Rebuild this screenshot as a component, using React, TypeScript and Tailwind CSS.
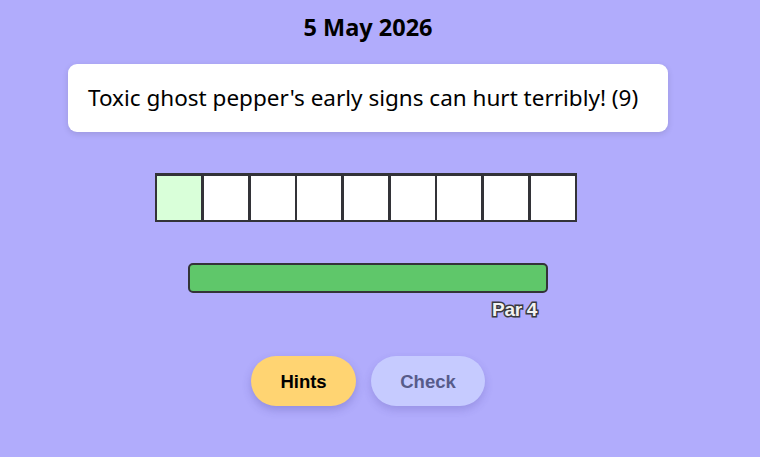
import React from 'react'

const LETTERS = 9

export default function App() {
  return (
    <div className="min-h-[457px] w-full bg-[#b1acfc] font-['Noto_Sans',sans-serif]">
      <div className="flex w-[736px] flex-col items-center pt-[11px]">
        <h1 className="text-[23.5px] font-bold leading-[32px] text-black">5 May 2026</h1>

        {/* Clue */}
        <div className="mt-[21px] flex h-[68px] w-[600px] items-center rounded-[9px] bg-white px-[20px] shadow-[0_2px_6px_rgba(0,0,0,0.12)]">
          <p className="text-[22.5px] leading-none text-black">
            Toxic ghost pepper's early signs can hurt terribly! (9)
          </p>
        </div>

        {/* Answer boxes */}
        <div className="mr-[4px] mt-[41px] flex gap-[2.7px] bg-[#333338] p-[2.7px]">
          {Array.from({ length: LETTERS }).map((_, i) => (
            <div
              key={i}
              className={i === 0 ? 'h-[44px] w-[44px] bg-[#d9ffd9]' : 'h-[44px] w-[44px] bg-white'}
            />
          ))}
        </div>

        {/* Progress */}
        <div className="mt-[41px] flex w-[360px] flex-col">
          <div className="h-[30px] w-full rounded-[5px] border-2 border-[#333338] bg-[#5fc76a]" />
          <span className="mr-[11px] mt-[7px] self-end font-['Liberation_Sans',sans-serif] text-[19px] font-bold leading-[20px] tracking-[-0.3px] text-[#f2f2f2] [paint-order:stroke_fill] [-webkit-text-stroke:3px_#3a3a40]">
            Par 4
          </span>
        </div>

        {/* Buttons */}
        <div className="mt-[36px] flex gap-[15px] font-['Liberation_Sans',sans-serif]">
          <button className="h-[50px] w-[105px] rounded-full bg-[#ffd472] text-[18.5px] font-bold text-black shadow-[0_4px_8px_rgba(60,50,140,0.25)]">
            Hints
          </button>
          <button className="h-[50px] w-[114px] rounded-full bg-[#c6cbff] text-[18.5px] font-bold text-[#575b8a] shadow-[0_4px_8px_rgba(60,50,140,0.2)]">
            Check
          </button>
        </div>
      </div>
    </div>
  )
}
